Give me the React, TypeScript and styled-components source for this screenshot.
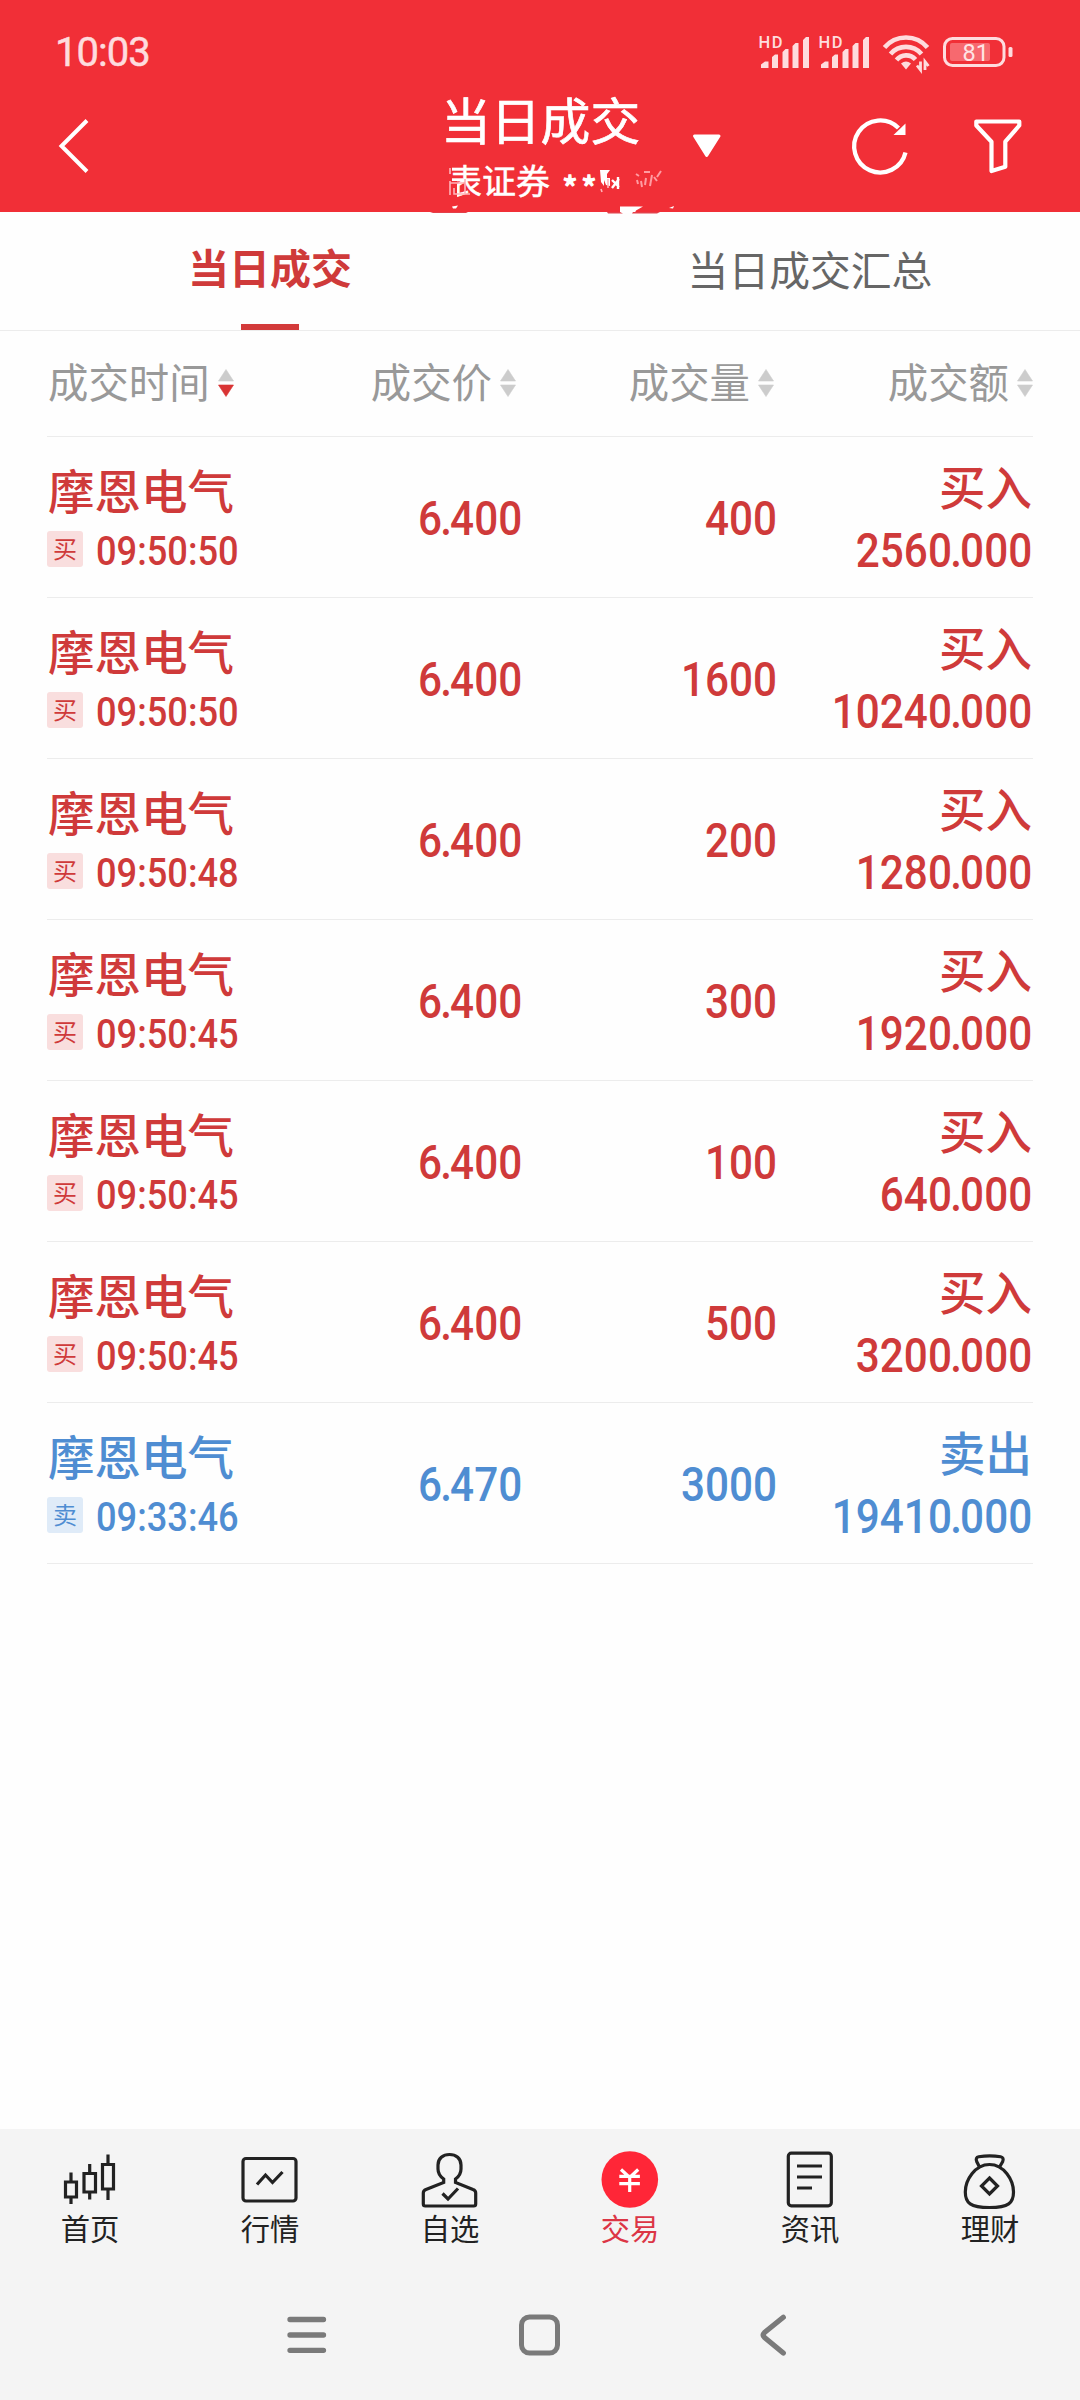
import React from 'react';
import styled, { createGlobalStyle } from 'styled-components';

const cjk = `'Noto Sans CJK SC', 'Noto Sans', sans-serif`;
const RED = '#cf3a3a';
const BLUE = '#4f8dd2';

const GlobalStyle = createGlobalStyle`
  * { box-sizing: border-box; }
  body { margin: 0; background: #fefefe; font-family: ${cjk}; }
  svg { display: block; flex: none; overflow: visible; }
`;

const Screen = styled.div`
  width: 1080px;
  height: 2400px;
  display: flex;
  flex-direction: column;
  background: #fefefe;
`;

const Header = styled.header`
  height: 212px;
  flex: none;
  background: #f12f37;
  color: #fff;
`;

const StatusBar = styled.div`
  height: 79px;
  padding: 26px 67px 0 55px;
  display: flex;
  justify-content: space-between;
  align-items: flex-start;
  color: #fedcde;
`;

const Clock = styled.span`
  font: 400 40px/53px Roboto, sans-serif;
  letter-spacing: -1px;
  -webkit-text-stroke: 0.5px #fedcde;
`;

const StatusIcons = styled.div`
  display: flex;
  height: 53px;
`;

const TitleBar = styled.div`
  height: 133px;
  display: grid;
  grid-template-columns: 430px 220px 430px;
`;

const BarSide = styled.div<{ $left: number }>`
  display: flex;
  align-items: center;
  height: 133px;
  padding-left: ${(p) => p.$left}px;
`;

const TitleBlock = styled.div`
  position: relative;
  display: flex;
  flex-direction: column;
  padding-top: 10px;
`;

const Title = styled.h1`
  margin: 0 0 0 11px;
  font-size: 49.8px;
  font-weight: 400;
  line-height: 58px;
  white-space: nowrap;
  -webkit-text-stroke: 0.7px #fff;
`;

const Account = styled.div`
  display: flex;
  margin: 14px 0 0 18px;
  font-size: 34px;
  line-height: 38px;
  -webkit-text-stroke: 0.5px #fff;
`;

const Mask = styled.span`
  padding: 8px 0 0 12px;
  letter-spacing: 3.2px;
  -webkit-text-stroke: 1.2px #fff;
`;

const Smudge = styled.svg`
  position: absolute;
  left: 0;
  top: 81px;
`;

const ActionGap = styled.span<{ $w: number }>`
  flex: none;
  width: ${(p) => p.$w}px;
`;

const Tabs = styled.nav`
  height: 119px;
  flex: none;
  display: grid;
  grid-template-columns: 1fr 1fr;
  border-bottom: 1px solid #ececec;
`;

const Tab = styled.div<{ $active?: boolean }>`
  display: flex;
  flex-direction: column;
  align-items: center;
  justify-content: space-between;
  padding-top: ${(p) => (p.$active ? 24 : 27)}px;
  font-size: ${(p) => (p.$active ? 41 : 40.8)}px;
  font-weight: ${(p) => (p.$active ? 700 : 400)};
  line-height: 60px;
  color: ${(p) => (p.$active ? RED : '#666')};
`;

const Indicator = styled.i`
  width: 58px;
  height: 6px;
  background: #d33a3a;
`;

const Table = styled.main`
  flex: 1;
  padding: 0 47px;
`;

const Row = styled.div`
  display: grid;
  grid-template-columns: 223px 252px 255px 256px;
  border-bottom: 1px solid #ececec;
`;

const HeadRow = styled(Row)`
  height: 106px;
`;

const HeadCell = styled.div<{ $left?: boolean; $pad: number }>`
  display: flex;
  align-items: center;
  justify-content: ${(p) => (p.$left ? 'flex-start' : 'flex-end')};
  gap: 8px;
  padding-right: ${(p) => p.$pad}px;
  padding-left: ${(p) => (p.$left ? 1 : 0)}px;
  font-size: 40.4px;
  line-height: 60px;
  color: #999;
  white-space: nowrap;
  & > span { margin-top: -5px; }
  & > svg { margin-top: -1px; }
`;

const TradeRow = styled(Row)<{ $sell?: boolean }>`
  height: 161px;
  color: ${(p) => (p.$sell ? BLUE : RED)};
`;

const NameCell = styled.div`
  padding-top: 24px;
`;

const StockName = styled.div`
  padding-left: 1px;
  font-size: 46.5px;
  font-weight: 500;
  line-height: 56px;
  white-space: nowrap;
`;

const TimeLine = styled.div`
  display: flex;
  height: 36px;
  margin-top: 14px;
`;

const Badge = styled.span<{ $sell?: boolean }>`
  width: 36px;
  height: 36px;
  margin-right: 13px;
  border-radius: 3px;
  background: ${(p) => (p.$sell ? '#dfebf8' : '#f9dede')};
  font-size: 24px;
  line-height: 34px;
  text-align: center;
`;

const Digits = styled.span<{ $size: number; $origin: 'left' | 'right'; $squeeze: number }>`
  display: inline-block;
  font: 500 ${(p) => p.$size}px/40px Roboto, sans-serif;
  transform: scaleX(${(p) => p.$squeeze});
  transform-origin: ${(p) => p.$origin} center;
  white-space: nowrap;
`;

const Point = styled.span`
  margin: 0 -2px;
`;

const NumCell = styled.div`
  display: flex;
  align-items: center;
  justify-content: flex-end;
  padding-top: 4px;
`;

const AmountCell = styled.div`
  display: flex;
  flex-direction: column;
  align-items: flex-end;
  padding: 20px 1px 0 0;
`;

const Side = styled.div`
  margin-bottom: 18px;
  font-size: 46.5px;
  font-weight: 500;
  line-height: 56px;
`;

const Footer = styled.footer`
  height: 271px;
  flex: none;
  background: #f4f4f4;
`;

const BottomTabs = styled.div`
  height: 141px;
  display: grid;
  grid-template-columns: repeat(6, 1fr);
`;

const BottomTab = styled.div<{ $active?: boolean }>`
  display: flex;
  flex-direction: column;
  align-items: center;
  padding-top: 21px;
  font-size: 29.3px;
  line-height: 34px;
  color: ${(p) => (p.$active ? '#dc3545' : '#222')};
`;

const SystemNav = styled.div`
  width: 700px;
  height: 130px;
  margin: 0 auto;
  display: grid;
  grid-template-columns: repeat(3, 1fr);
  justify-items: center;
  align-items: center;
`;

const Signal = () => (
  <svg width="60" height="53" viewBox="0 0 60 53" fill="#fedcde">
    <text x="3.5" y="22" fontFamily="Roboto, sans-serif" fontSize="16.5" fontWeight="500" textLength="24">HD</text>
    <path d="M6 42v-3.500l4-3h3.500V42zM17 42V31l3-2.500h3V42zM27.500 42V26l3-3h3V42zM37.500 42V20l3-3h3V42zM48 42V14l3-3h3V42z" />
  </svg>
);

const Wifi = () => (
  <svg width="67" height="53" viewBox="0 0 67 53" fill="none" stroke="#fedcde" strokeWidth="4.600">
    <path d="M9.500 21.500a28 28 0 0 1 43 0M15.500 28a20.500 20.500 0 0 1 31 0M21.500 34a12.500 12.500 0 0 1 19-0.500" />
    <path d="M26 37.500q5-4 10 0l-5 6z" fill="#fedcde" stroke="none" />
    <path d="M45.500 35.500v8.500l-3.500-4.500M50 44v-8.500l3.500 4.500" strokeWidth="2.800" />
  </svg>
);

const Battery = () => (
  <svg width="71" height="53" viewBox="0 0 71 53" fill="none">
    <rect x="2.500" y="12.500" width="59.500" height="27" rx="8" stroke="#fedcde" strokeWidth="3" />
    <rect x="8" y="17" width="40" height="18" rx="2" fill="#f7696f" />
    <rect x="66.500" y="21" width="4" height="10" rx="1.500" fill="#fedcde" />
    <text x="20.500" y="34.800" fill="#fee4e5" fontFamily="Roboto, sans-serif" fontSize="23.500">81</text>
  </svg>
);

const Sorter = ({ down }: { down?: boolean }) => (
  <svg width="16" height="28" viewBox="0 0 16 28">
    <path d="M8 0.500L15.500 12H0.500z" fill="#ccc" stroke="#ccc" strokeWidth="0.600" />
    <path d="M0.500 16h15L8 27.500z" fill={down ? '#d93434' : '#ccc'} stroke={down ? '#d93434' : '#ccc'} strokeWidth="0.600" />
  </svg>
);

const Decimal = ({ value }: { value: string }) => {
  const [whole, fraction] = value.split('.');
  return (
    <Digits $size={47.5} $origin="right" $squeeze={0.89}>
      {whole}
      {fraction && <Point>.</Point>}
      {fraction}
    </Digits>
  );
};

const icons: Record<string, React.ReactNode> = {
  首页: (
    <>
      <path d="M5.500 32h11v15h-11zM11 22.500V32M11 47v7M24 23.500h11.500v18.500H24zM29.700 14v9.500M29.700 42v7.500M42.500 14.500h11v24.500h-11zM48 4.500v10M48 39v11" />
    </>
  ),
  行情: (
    <>
      <rect x="3" y="8.500" width="53" height="42.500" rx="3" />
      <path d="M17 34.500l8.500-9.500 7 7.500 10-10.500" />
    </>
  ),
  自选: (
    <>
      <path d="M23.700 29v3.500L6 39.500q-2.700 1-2.700 3.500V54q0 2 2 2h48.400q2 0 2-2V43q0-2.500-2.700-3.500L35.500 32.500V29q5.500-4 5.500-10v-4c0-6.500-5-10.500-11.500-10.500S18 8.500 18 15v4q0 6 5.700 10z" />
      <path d="M22.500 43.500l5.500 5.500 10-10.500" />
    </>
  ),
  交易: (
    <>
      <circle cx="29.800" cy="29.500" r="28.300" fill="#ff2637" stroke="none" />
      <path d="M21 19.500l8.700 8 8.500-8M19.300 26.300h20.600M19.300 33.700h20.600M29.700 27v15" stroke="#fff" />
    </>
  ),
  资讯: (
    <>
      <rect x="8.300" y="3.200" width="43" height="52.600" rx="3" />
      <path d="M17 16h25M17 27h25M17 38h15" />
    </>
  ),
  理财: (
    <>
      <path d="M20 18l-3.300-6.500q-1.500-4 2-4.700 11-2 22 0 3.500.700 2 4.700L39 18" />
      <path d="M29.500 14.500C15 14.500 5.300 30 5.300 42c0 11 5 15.500 24.200 15.500S53.500 53 53.500 42c0-12-9.500-27.500-24-27.500z" />
      <path d="M29.500 28l8 8-8 8-8-8z" />
    </>
  ),
};

const trades = [
  ['09:50:50', '6.400', '400', '2560.000'],
  ['09:50:50', '6.400', '1600', '10240.000'],
  ['09:50:48', '6.400', '200', '1280.000'],
  ['09:50:45', '6.400', '300', '1920.000'],
  ['09:50:45', '6.400', '100', '640.000'],
  ['09:50:45', '6.400', '500', '3200.000'],
  ['09:33:46', '6.470', '3000', '19410.000', 'sell'],
];

export default function App() {
  return (
    <Screen>
      <GlobalStyle />
      <Header>
        <StatusBar>
          <Clock>10:03</Clock>
          <StatusIcons>
            <Signal />
            <Signal />
            <Wifi />
            <Battery />
          </StatusIcons>
        </StatusBar>
        <TitleBar>
          <BarSide $left={58}>
            <svg width="32" height="54" viewBox="0 0 32 54" fill="none" stroke="#fff" strokeWidth="4">
              <path d="M29 1.500L3.500 27 29 52.500" />
            </svg>
          </BarSide>
          <TitleBlock>
            <Title>当日成交</Title>
            <Account>
              表证券<Mask>**</Mask>
            </Account>
            <Smudge width="260" height="56" viewBox="0 0 260 56">
              <path d="M15 3h7v18h-7zM15 21h12v17H15z" fill="#f12f37" />
              <path d="M20 8v6M20 21v14M20 23h14M24 28v6h16M35 19v15" stroke="#ffb4b8" strokeWidth="1.600" fill="none" />
              <path d="M170 10h10l-3 4v4h3v8l-4-1-2-5v6l-3-4z" fill="#fff" />
              <path d="M171 29l1 3M178 19v9" stroke="#ffb4b8" strokeWidth="1.600" />
              <path d="M182 20l7 7M189 19l-7 9M188 17v12" stroke="#fff" strokeWidth="2.400" />
              <path d="M206 14l3 2M207 20l1 4M214 12h6M216 18l-1 7M222 15l-2 11M224 17l3 4M231 11l-4 6M211 21l1 6" stroke="#ff9ca2" strokeWidth="2" />
              <path d="M22 46.500l6-1-2 3h-3zM190 46.500h23l-7 4-1 2h-15zM239 48l5-2-1 2.500z" fill="#fff" />
              <path d="M0 52h38l-2 1H3zM177 52h13l3 1.500h-15zM203 52h27l-3 1.500h-25z" fill="#e3404a" />
            </Smudge>
          </TitleBlock>
          <BarSide $left={42}>
            <svg width="30" height="24" viewBox="0 0 30 24">
              <path d="M2.500 2h24.500L14.700 21.500z" fill="#fff" stroke="#fff" strokeWidth="3" strokeLinejoin="round" />
            </svg>
            <ActionGap $w={129} />
            <svg width="58" height="58" viewBox="0 0 58 58" fill="none">
              <path d="M54.500 35.500A26 26 0 1 1 47.500 11" stroke="#fff" strokeWidth="4.300" />
              <path d="M54.500 6.500V18H42.500z" fill="#fff" />
            </svg>
            <ActionGap $w={65} />
            <svg width="48" height="54" viewBox="0 0 48 54" fill="none" stroke="#fff" strokeWidth="4.200" strokeLinejoin="round">
              <path d="M2.300 2.500h43v4L31.300 22.700v25L17.500 52V22.700L2.300 6.500z" />
            </svg>
          </BarSide>
        </TitleBar>
      </Header>
      <Tabs>
        <Tab $active>
          当日成交
          <Indicator />
        </Tab>
        <Tab>当日成交汇总</Tab>
      </Tabs>
      <Table>
        <HeadRow>
          <HeadCell $left $pad={0}><span>成交时间</span><Sorter down /></HeadCell>
          <HeadCell $pad={6}><span>成交价</span><Sorter /></HeadCell>
          <HeadCell $pad={3}><span>成交量</span><Sorter /></HeadCell>
          <HeadCell $pad={0}><span>成交额</span><Sorter /></HeadCell>
        </HeadRow>
        {trades.map(([time, price, volume, amount, kind], i) => {
          const sell = kind === 'sell';
          return (
            <TradeRow key={i} $sell={sell}>
              <NameCell>
                <StockName>摩恩电气</StockName>
                <TimeLine>
                  <Badge $sell={sell}>{sell ? '卖' : '买'}</Badge>
                  <Digits $size={40.5} $origin="left" $squeeze={0.895}>{time}</Digits>
                </TimeLine>
              </NameCell>
              <NumCell><Decimal value={price} /></NumCell>
              <NumCell><Decimal value={volume} /></NumCell>
              <AmountCell>
                <Side>{sell ? '卖出' : '买入'}</Side>
                <Decimal value={amount} />
              </AmountCell>
            </TradeRow>
          );
        })}
      </Table>
      <Footer>
        <BottomTabs>
          {Object.keys(icons).map((label) => (
            <BottomTab key={label} $active={label === '交易'}>
              <svg width="60" height="60" viewBox="0 0 60 60" fill="none" stroke="#222" strokeWidth="3.200">
                {icons[label]}
              </svg>
              {label}
            </BottomTab>
          ))}
        </BottomTabs>
        <SystemNav>
          <svg width="40" height="40" viewBox="0 0 40 40" stroke="#7a7a7a" strokeWidth="5.300" strokeLinecap="round">
            <path d="M3 4.500h33.500M3 20h33.500M3 35.300h33.500" />
          </svg>
          <svg width="42" height="42" viewBox="0 0 42 42" fill="none" stroke="#7a7a7a" strokeWidth="5">
            <rect x="2.500" y="3" width="36" height="36" rx="8" />
          </svg>
          <svg width="26" height="42" viewBox="0 0 26 42" fill="none" stroke="#7a7a7a" strokeWidth="5.300" strokeLinecap="round" strokeLinejoin="round">
            <path d="M23.300 3.300L4.500 18.500q-2.500 2.500 0 5L23.300 39" />
          </svg>
        </SystemNav>
      </Footer>
    </Screen>
  );
}
